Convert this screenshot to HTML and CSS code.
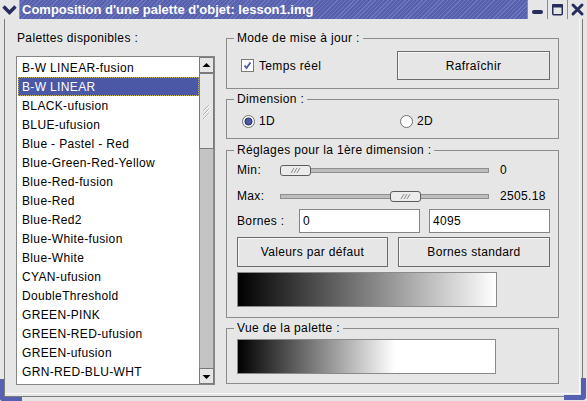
FILE: index.html
```html
<!DOCTYPE html>
<html lang="fr">
<head>
<meta charset="utf-8">
<title>Composition d'une palette d'objet</title>
<link rel="stylesheet" href="styles.css">
</head>
<body>
<div class="window">
  <div class="titlebar">
    <div class="tb-menu">
      <svg width="19" height="19" viewBox="0 0 19 19"><polyline points="3.5,6.5 9.5,12.5 15.5,6.5" fill="none" stroke="#262c5c" stroke-width="3.4"/></svg>
    </div>
    <div class="tb-title">Composition d'une palette d'objet: lesson1.img</div>
    <div class="tb-btn">
      <svg width="19" height="19" viewBox="0 0 19 19"><rect x="4" y="10" width="11" height="4" rx="2" fill="#262c5c"/></svg>
    </div>
    <div class="tb-btn">
      <svg width="19" height="19" viewBox="0 0 19 19"><rect x="4.75" y="4.75" width="9.5" height="10" rx="1" fill="none" stroke="#262c5c" stroke-width="1.5"/><rect x="4" y="4" width="11" height="3.5" rx="1" fill="#262c5c"/></svg>
    </div>
    <div class="tb-btn">
      <svg width="19" height="19" viewBox="0 0 19 19"><path d="M5 5 L14 14 M14 5 L5 14" stroke="#262c5c" stroke-width="3" stroke-linecap="round"/></svg>
    </div>
  </div>

  <div class="client">
    <div class="left">
      <div class="label">Palettes disponibles :</div>
      <div class="listbox">
        <ul class="items">
          <li>B-W LINEAR-fusion</li>
          <li class="selected">B-W LINEAR</li>
          <li>BLACK-ufusion</li>
          <li>BLUE-ufusion</li>
          <li>Blue - Pastel - Red</li>
          <li>Blue-Green-Red-Yellow</li>
          <li>Blue-Red-fusion</li>
          <li>Blue-Red</li>
          <li>Blue-Red2</li>
          <li>Blue-White-fusion</li>
          <li>Blue-White</li>
          <li>CYAN-ufusion</li>
          <li>DoubleThreshold</li>
          <li>GREEN-PINK</li>
          <li>GREEN-RED-ufusion</li>
          <li>GREEN-ufusion</li>
          <li>GRN-RED-BLU-WHT</li>
        </ul>
        <div class="scrollbar">
          <div class="sb-btn">
            <svg width="13" height="14" viewBox="0 0 13 14"><polygon points="2.5,9 6.5,5 10.5,9" fill="#000"/></svg>
          </div>
          <div class="sb-trough">
            <div class="sb-thumb">
              <svg width="13" height="16" viewBox="0 0 13 16"><path d="M3 8 L9 2 M3 12 L9 6 M3 16 L9 10" stroke="#b0b0b0" stroke-width="1"/><path d="M4 8 L10 2 M4 12 L10 6 M4 16 L10 10" stroke="#ffffff" stroke-width="1"/></svg>
            </div>
          </div>
          <div class="sb-btn">
            <svg width="13" height="14" viewBox="0 0 13 14"><polygon points="2.5,6 6.5,10 10.5,6" fill="#000"/></svg>
          </div>
        </div>
      </div>
    </div>

    <div class="right">
      <fieldset class="group g-mode">
        <legend>Mode de mise à jour :</legend>
        <div class="row-mode">
          <label class="check">
            <svg width="13" height="13" viewBox="0 0 13 13"><rect x="0.5" y="0.5" width="12" height="12" fill="#fff" stroke="#7a7a7a"/><path d="M3.5 6.5 L5.5 9 L9.5 3.5" fill="none" stroke="#4a58a6" stroke-width="1.8"/></svg>
            <span>Temps réel</span>
          </label>
          <button class="btn btn-refresh">Rafraîchir</button>
        </div>
      </fieldset>

      <fieldset class="group g-dim">
        <legend>Dimension :</legend>
        <div class="row-dim">
          <label class="radio">
            <svg width="13" height="13" viewBox="0 0 13 13"><circle cx="6.5" cy="6.5" r="6" fill="#fff" stroke="#6f6f6f"/><circle cx="6.5" cy="6.5" r="3.6" fill="#4a58a6" stroke="#262c5c" stroke-width="1"/></svg>
            <span>1D</span>
          </label>
          <label class="radio">
            <svg width="13" height="13" viewBox="0 0 13 13"><circle cx="6.5" cy="6.5" r="6" fill="#fff" stroke="#6f6f6f"/></svg>
            <span>2D</span>
          </label>
        </div>
      </fieldset>

      <fieldset class="group g-settings">
        <legend>Réglages pour la 1ère dimension :</legend>
        <div class="settings">
          <div class="slider-row">
            <span class="s-label">Min:</span>
            <div class="slider">
              <div class="track"></div>
              <div class="thumb" style="left:0px"><svg width="29" height="9" viewBox="0 0 29 9"><path d="M10 7 L13 2 M13 7 L16 2 M16 7 L19 2" stroke="#8a8a8a" stroke-width="1"/></svg></div>
            </div>
            <span class="s-value">0</span>
          </div>
          <div class="slider-row row-max">
            <span class="s-label">Max:</span>
            <div class="slider">
              <div class="track"></div>
              <div class="thumb" style="left:110px"><svg width="29" height="9" viewBox="0 0 29 9"><path d="M10 7 L13 2 M13 7 L16 2 M16 7 L19 2" stroke="#8a8a8a" stroke-width="1"/></svg></div>
            </div>
            <span class="s-value">2505.18</span>
          </div>
          <div class="bounds-row">
            <span class="s-label b-label">Bornes :</span>
            <input class="entry" type="text" value="0">
            <input class="entry" type="text" value="4095">
          </div>
          <div class="buttons-row">
            <button class="btn btn-default">Valeurs par défaut</button>
            <button class="btn btn-std">Bornes standard</button>
          </div>
          <div class="gradient grad-linear"></div>
        </div>
      </fieldset>

      <fieldset class="group g-view">
        <legend>Vue de la palette :</legend>
        <div class="view">
          <div class="gradient grad-view"></div>
        </div>
      </fieldset>
    </div>
  </div>

  <div class="corner corner-left"></div>
  <div class="corner corner-right"></div>
</div>
</body>
</html>
```

FILE: styles.css
```css
html, body {
  margin: 0;
  padding: 0;
}

body {
  width: 587px;
  height: 401px;
  overflow: hidden;
  background: #e6e6e6;
  font-family: "Liberation Sans", Arial, sans-serif;
  font-size: 12px;
  letter-spacing: 0.35px;
  color: #000;
}

.window {
  position: relative;
  width: 587px;
  height: 401px;
  display: flex;
  flex-direction: column;
  background: #e6e6e6;
}

/* ---------- title bar ---------- */
.titlebar {
  flex: none;
  height: 19px;
  display: flex;
}

.tb-menu {
  width: 20px;
  height: 19px;
  background: #e6e6e6;
  box-sizing: border-box;
  border-right: 1px solid #9a9a9a;
}

.tb-menu svg, .tb-btn svg {
  display: block;
}

.tb-title {
  flex: 1;
  min-width: 0;
  background: repeating-linear-gradient(135deg, #5660ad 0px, #5660ad 2px, #6d76bf 2px, #6d76bf 3px);
  color: #fff;
  font-weight: bold;
  font-size: 13px;
  letter-spacing: 0;
  line-height: 19px;
  padding-left: 2px;
  white-space: nowrap;
  overflow: hidden;
}

.tb-btn {
  width: 20px;
  height: 19px;
  box-sizing: border-box;
  border-left: 1px solid #8c8c8c;
  background: #e6e6e6;
}

/* ---------- client frame ---------- */
.client {
  flex: 1;
  margin: 0 4px 4px 4px;
  border: 1px solid #7c7c7c;
  border-top: 0;
  box-shadow: inset -2px -2px 0 #e6e6e6, inset -3px -3px 0 #f8f8f8;
  padding: 12px 22px 11px 11px;
  display: flex;
  gap: 11px;
  min-height: 0;
}

/* ---------- left column ---------- */
.left {
  width: 199px;
  display: flex;
  flex-direction: column;
}

.label {
  line-height: 14px;
  height: 14px;
  padding-left: 1px;
}

.listbox {
  margin-top: 11px;
  flex: 1;
  min-height: 0;
  border: 1px solid #858585;
  background: #fff;
  display: flex;
}

.items {
  list-style: none;
  margin: 0;
  padding: 1px 0 0 1px;
  flex: 1;
  overflow: hidden;
}

.items li {
  height: 18px;
  line-height: 18px;
  padding-top: 1px;
  padding-left: 4px;
  white-space: nowrap;
}

.items li.selected {
  background: #4a58a6;
  color: #fff;
  outline: 1px dotted #c9b760;
  outline-offset: -1px;
}

.scrollbar {
  width: 15px;
  display: flex;
  flex-direction: column;
}

.sb-btn {
  height: 16px;
  box-sizing: border-box;
  border: 1px solid #7a7a7a;
  background: #e6e6e6;
}

.sb-btn svg {
  display: block;
}

.sb-trough {
  flex: 1;
  background: #c4c4c4;
  border-left: 1px solid #8c8c8c;
  border-right: 1px solid #8c8c8c;
}

.sb-thumb {
  height: 76px;
  margin: 0 -1px;
  box-sizing: border-box;
  border: 1px solid #7a7a7a;
  background: #e6e6e6;
  display: flex;
  align-items: center;
  justify-content: center;
}

.sb-thumb svg {
  display: block;
}

/* ---------- right column ---------- */
.right {
  width: 333px;
  display: flex;
  flex-direction: column;
}

.group {
  margin: 0;
  padding: 0;
  border: 1px solid #8c8c8c;
  min-width: 0;
}

.group legend {
  margin-left: 7px;
  padding: 0 3px;
  line-height: 14px;
  height: 14px;
  font-size: 12px;
}

.g-dim { margin-top: 3px; }
.g-settings { margin-top: 4px; }
.g-view { margin-top: 3px; }

.row-mode {
  display: flex;
  align-items: center;
  justify-content: space-between;
  padding: 6px 8px 8px 14px;
}

.check, .radio {
  display: flex;
  align-items: center;
  gap: 5px;
}

.check svg, .radio svg {
  display: block;
  flex: none;
}

.btn {
  font-family: "Liberation Sans", Arial, sans-serif;
  font-size: 12px;
  letter-spacing: 0.35px;
  color: #000;
  background: #e6e6e6;
  border: 1px solid #6c6c6c;
  box-shadow: inset 1px 1px 0 #f6f6f6;
  border-radius: 0;
  padding: 0;
  margin: 0;
}

.btn-refresh {
  width: 153px;
  height: 29px;
}

.row-dim {
  display: grid;
  grid-template-columns: 158px 1fr;
  padding: 8px 8px 10px 15px;
  height: 14px;
  align-items: center;
}

.row-dim .radio {
  gap: 4px;
  line-height: 14px;
}

.settings {
  padding: 4px 8px 10px 10px;
  display: flex;
  flex-direction: column;
}

.slider-row {
  height: 18px;
  display: flex;
  align-items: center;
}

.row-max {
  margin-top: 8px;
}

.s-label {
  width: 43px;
  flex: none;
}

.slider {
  position: relative;
  width: 209px;
  height: 11px;
  flex: none;
}

.track {
  position: absolute;
  left: 0;
  right: 0;
  top: 3px;
  height: 5px;
  box-sizing: border-box;
  background: #bdbdbd;
  border: 1px solid #8e8e8e;
}

.thumb {
  position: absolute;
  top: 0;
  width: 31px;
  height: 11px;
  box-sizing: border-box;
  border: 1px solid #5c5c5c;
  border-radius: 3px;
  background: #ececec;
}

.thumb svg {
  display: block;
}

.s-value {
  margin-left: 11px;
}

.bounds-row {
  margin-top: 4px;
  display: flex;
  align-items: center;
  height: 24px;
}

.b-label {
  width: 62px;
}

.entry {
  width: 121px;
  height: 24px;
  box-sizing: border-box;
  margin: 0;
  border: 1px solid #858585;
  background: #fff;
  font-family: "Liberation Sans", Arial, sans-serif;
  font-size: 12px;
  letter-spacing: 0.35px;
  padding: 0 0 0 3px;
  color: #000;
  outline: none;
}

.entry + .entry {
  margin-left: 9px;
}

.buttons-row {
  margin-top: 4px;
  display: flex;
  gap: 10px;
}

.btn-default {
  width: 151px;
  height: 30px;
}

.btn-std {
  width: 152px;
  height: 30px;
}

.gradient {
  height: 35px;
  box-sizing: border-box;
  border: 1px solid #8a8a8a;
}

.grad-linear {
  margin-top: 5px;
  width: 260px;
  background: linear-gradient(to right, #000 0%, #fff 100%);
}

.view {
  padding: 4px 8px 9px 10px;
}

.grad-view {
  width: 259px;
  background: linear-gradient(to right, #000 0%, #fff 61%, #fff 100%);
}

/* ---------- resize corners ---------- */
.corner {
  position: absolute;
  box-sizing: border-box;
  width: 22px;
  height: 22px;
  border-color: #5560b0;
  border-style: solid;
}

.corner-left {
  left: 0;
  bottom: 0;
  border-width: 0 0 4px 4px;
  border-bottom-left-radius: 3px;
}

.corner-right {
  right: 1px;
  bottom: 1px;
  border-width: 0 5px 5px 0;
  border-bottom-right-radius: 4px;
}
```
